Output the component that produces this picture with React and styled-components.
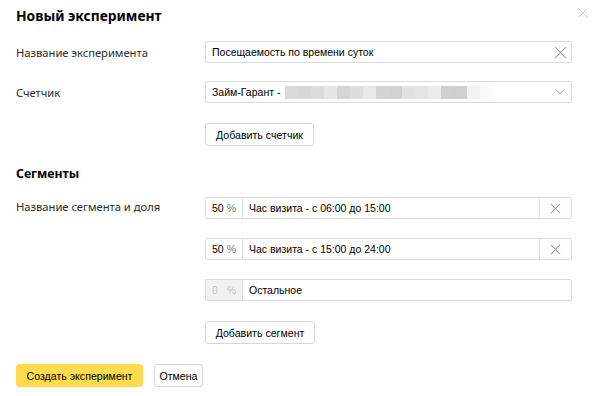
import React from "react";
import styled, { createGlobalStyle } from "styled-components";

const Global = createGlobalStyle`
  html, body { margin: 0; padding: 0; background: #fff; }
  body { font-family: "Liberation Sans", Arial, sans-serif; color: #000; }
  * { box-sizing: border-box; }
`;

const Dialog = styled.div`
  position: relative;
  width: 600px;
  height: 396px;
  padding: 6px 28px 0 16px;
  display: flex;
  flex-direction: column;
`;

const Title = styled.h1`
  margin: 0;
  font-family: "Noto Sans", "Open Sans", sans-serif;
  font-weight: 700;
  font-size: 13.8px;
  line-height: 20px;
  color: #000;
`;

const SectionTitle = styled(Title)`
  margin-top: ${(p) => p.$mt || 0}px;
  font-size: 12.3px;
`;

const CloseButton = styled.button`
  position: absolute;
  top: 7px;
  right: 11px;
  width: 12px;
  height: 12px;
  padding: 0;
  border: 0;
  background: none;
  display: flex;
  align-items: center;
  justify-content: center;
`;

const Row = styled.div`
  display: grid;
  grid-template-columns: 189px 367px;
  align-items: ${(p) => (p.$top ? "start" : "center")};
  margin-top: ${(p) => p.$mt || 0}px;
`;

const Label = styled.div`
  font-family: "Noto Sans", "Open Sans", sans-serif;
  font-size: 11.2px;
  color: #2b2b2b;
  padding-top: ${(p) => (p.$top ? 2 : 0)}px;
`;

const Field = styled.div`
  height: 22px;
  border: 1px solid #dcdcdc;
  border-radius: 2px;
  display: flex;
  align-items: stretch;
  background: #fff;
`;

const FieldText = styled.div`
  flex: 1;
  display: flex;
  align-items: center;
  padding-left: 6px;
  font-size: 10.5px;
  color: #000;
  white-space: nowrap;
  overflow: hidden;
`;

const IconSlot = styled.div`
  width: ${(p) => p.$w || 24}px;
  display: flex;
  align-items: center;
  justify-content: center;
  border-left: ${(p) => (p.$divider ? "1px solid #dcdcdc" : "none")};
`;

const Percent = styled.div`
  width: 37px;
  display: flex;
  align-items: center;
  justify-content: space-between;
  padding: 0 6px 0 6px;
  font-size: 10.5px;
  color: ${(p) => (p.$muted ? "#c4c4c4" : "#000")};
  background: ${(p) => (p.$muted ? "#f2f2f2" : "#fff")};
  border-right: 1px solid #dcdcdc;
  span:last-child { color: ${(p) => (p.$muted ? "#c4c4c4" : "#777")}; }
`;

const Blur = styled.div`
  display: flex;
  margin-left: 5px;
  height: 13px;
`;

const Pixel = styled.span`
  width: 13px;
  height: 13px;
  background: ${(p) => p.$c};
`;

const Button = styled.button`
  height: 23px;
  padding: 0;
  border: 1px solid #d6d6d6;
  border-radius: 3px;
  background: ${(p) => (p.$primary ? "#ffdb4d" : "#fff")};
  border-color: ${(p) => (p.$primary ? "#ffdb4d" : "#d6d6d6")};
  font-family: "Liberation Sans", Arial, sans-serif;
  font-size: 10.6px;
  color: #000;
  white-space: nowrap;
  justify-self: start;
  width: ${(p) => (p.$w ? p.$w + "px" : "auto")};
`;

const Footer = styled.div`
  display: flex;
  gap: 11px;
  margin-top: ${(p) => p.$mt || 0}px;
`;

const Cross = ({ size = 12, color = "#a8a8a8", sw = 1.2 }) => (
  <svg width={size} height={size} viewBox="0 0 12 12">
    <path d="M1 1L11 11M11 1L1 11" stroke={color} strokeWidth={sw} fill="none" />
  </svg>
);

const Chevron = () => (
  <svg width="10" height="6" viewBox="0 0 10 6">
    <path d="M1 1L5 4.5L9 1" stroke="#999" strokeWidth="1" fill="none" />
  </svg>
);

const shades = ["#dadada", "#d8d8d8", "#dcdcdc", "#e6e6e6", "#d6d6d6", "#dddddd", "#e9e9e9", "#d4d4d4", "#d2d2d2", "#e2e2e2", "#e4e4e4", "#ebebeb", "#d0d0d0", "#cfcfcf", "#f2f2f2", "#fafafa"];

const segments = [
  { pct: "50", name: "Час визита - с 06:00 до 15:00", removable: true },
  { pct: "50", name: "Час визита - с 15:00 до 24:00", removable: true },
  { pct: "0", name: "Остальное", removable: false },
];

export default function App() {
  return (
    <>
      <Global />
      <Dialog>
        <Title>Новый эксперимент</Title>
        <CloseButton aria-label="Закрыть">
          <Cross size={10} color="#c8c8c8" sw={1} />
        </CloseButton>

        <Row $mt={15}>
          <Label>Название эксперимента</Label>
          <Field>
            <FieldText>Посещаемость по времени суток</FieldText>
            <IconSlot $w={22}>
              <Cross size={13} color="#a0a0a0" sw={1.1} />
            </IconSlot>
          </Field>
        </Row>

        <Row $mt={18}>
          <Label>Счетчик</Label>
          <Field>
            <FieldText>
              Займ-Гарант -
              <Blur>
                {shades.map((c, i) => (
                  <Pixel key={i} $c={c} />
                ))}
              </Blur>
            </FieldText>
            <IconSlot $w={22}>
              <Chevron />
            </IconSlot>
          </Field>
        </Row>

        <Row $mt={20}>
          <div />
          <Button $w={109}>Добавить счетчик</Button>
        </Row>

        <SectionTitle $mt={18}>Сегменты</SectionTitle>

        {segments.map((s, i) => (
          <Row key={i} $top $mt={i === 0 ? 13 : 19}>
            <Label $top>{i === 0 ? "Название сегмента и доля" : ""}</Label>
            <Field>
              <Percent $muted={!s.removable}>
                <span>{s.pct}</span>
                <span>%</span>
              </Percent>
              <FieldText>{s.name}</FieldText>
              {s.removable && (
                <IconSlot $w={32} $divider>
                  <Cross size={11} color="#a0a0a0" sw={1.1} />
                </IconSlot>
              )}
            </Field>
          </Row>
        ))}

        <Row $mt={20}>
          <div />
          <Button $w={110}>Добавить сегмент</Button>
        </Row>

        <Footer $mt={20}>
          <Button $primary $w={127}>Создать эксперимент</Button>
          <Button $w={49}>Отмена</Button>
        </Footer>
      </Dialog>
    </>
  );
}
